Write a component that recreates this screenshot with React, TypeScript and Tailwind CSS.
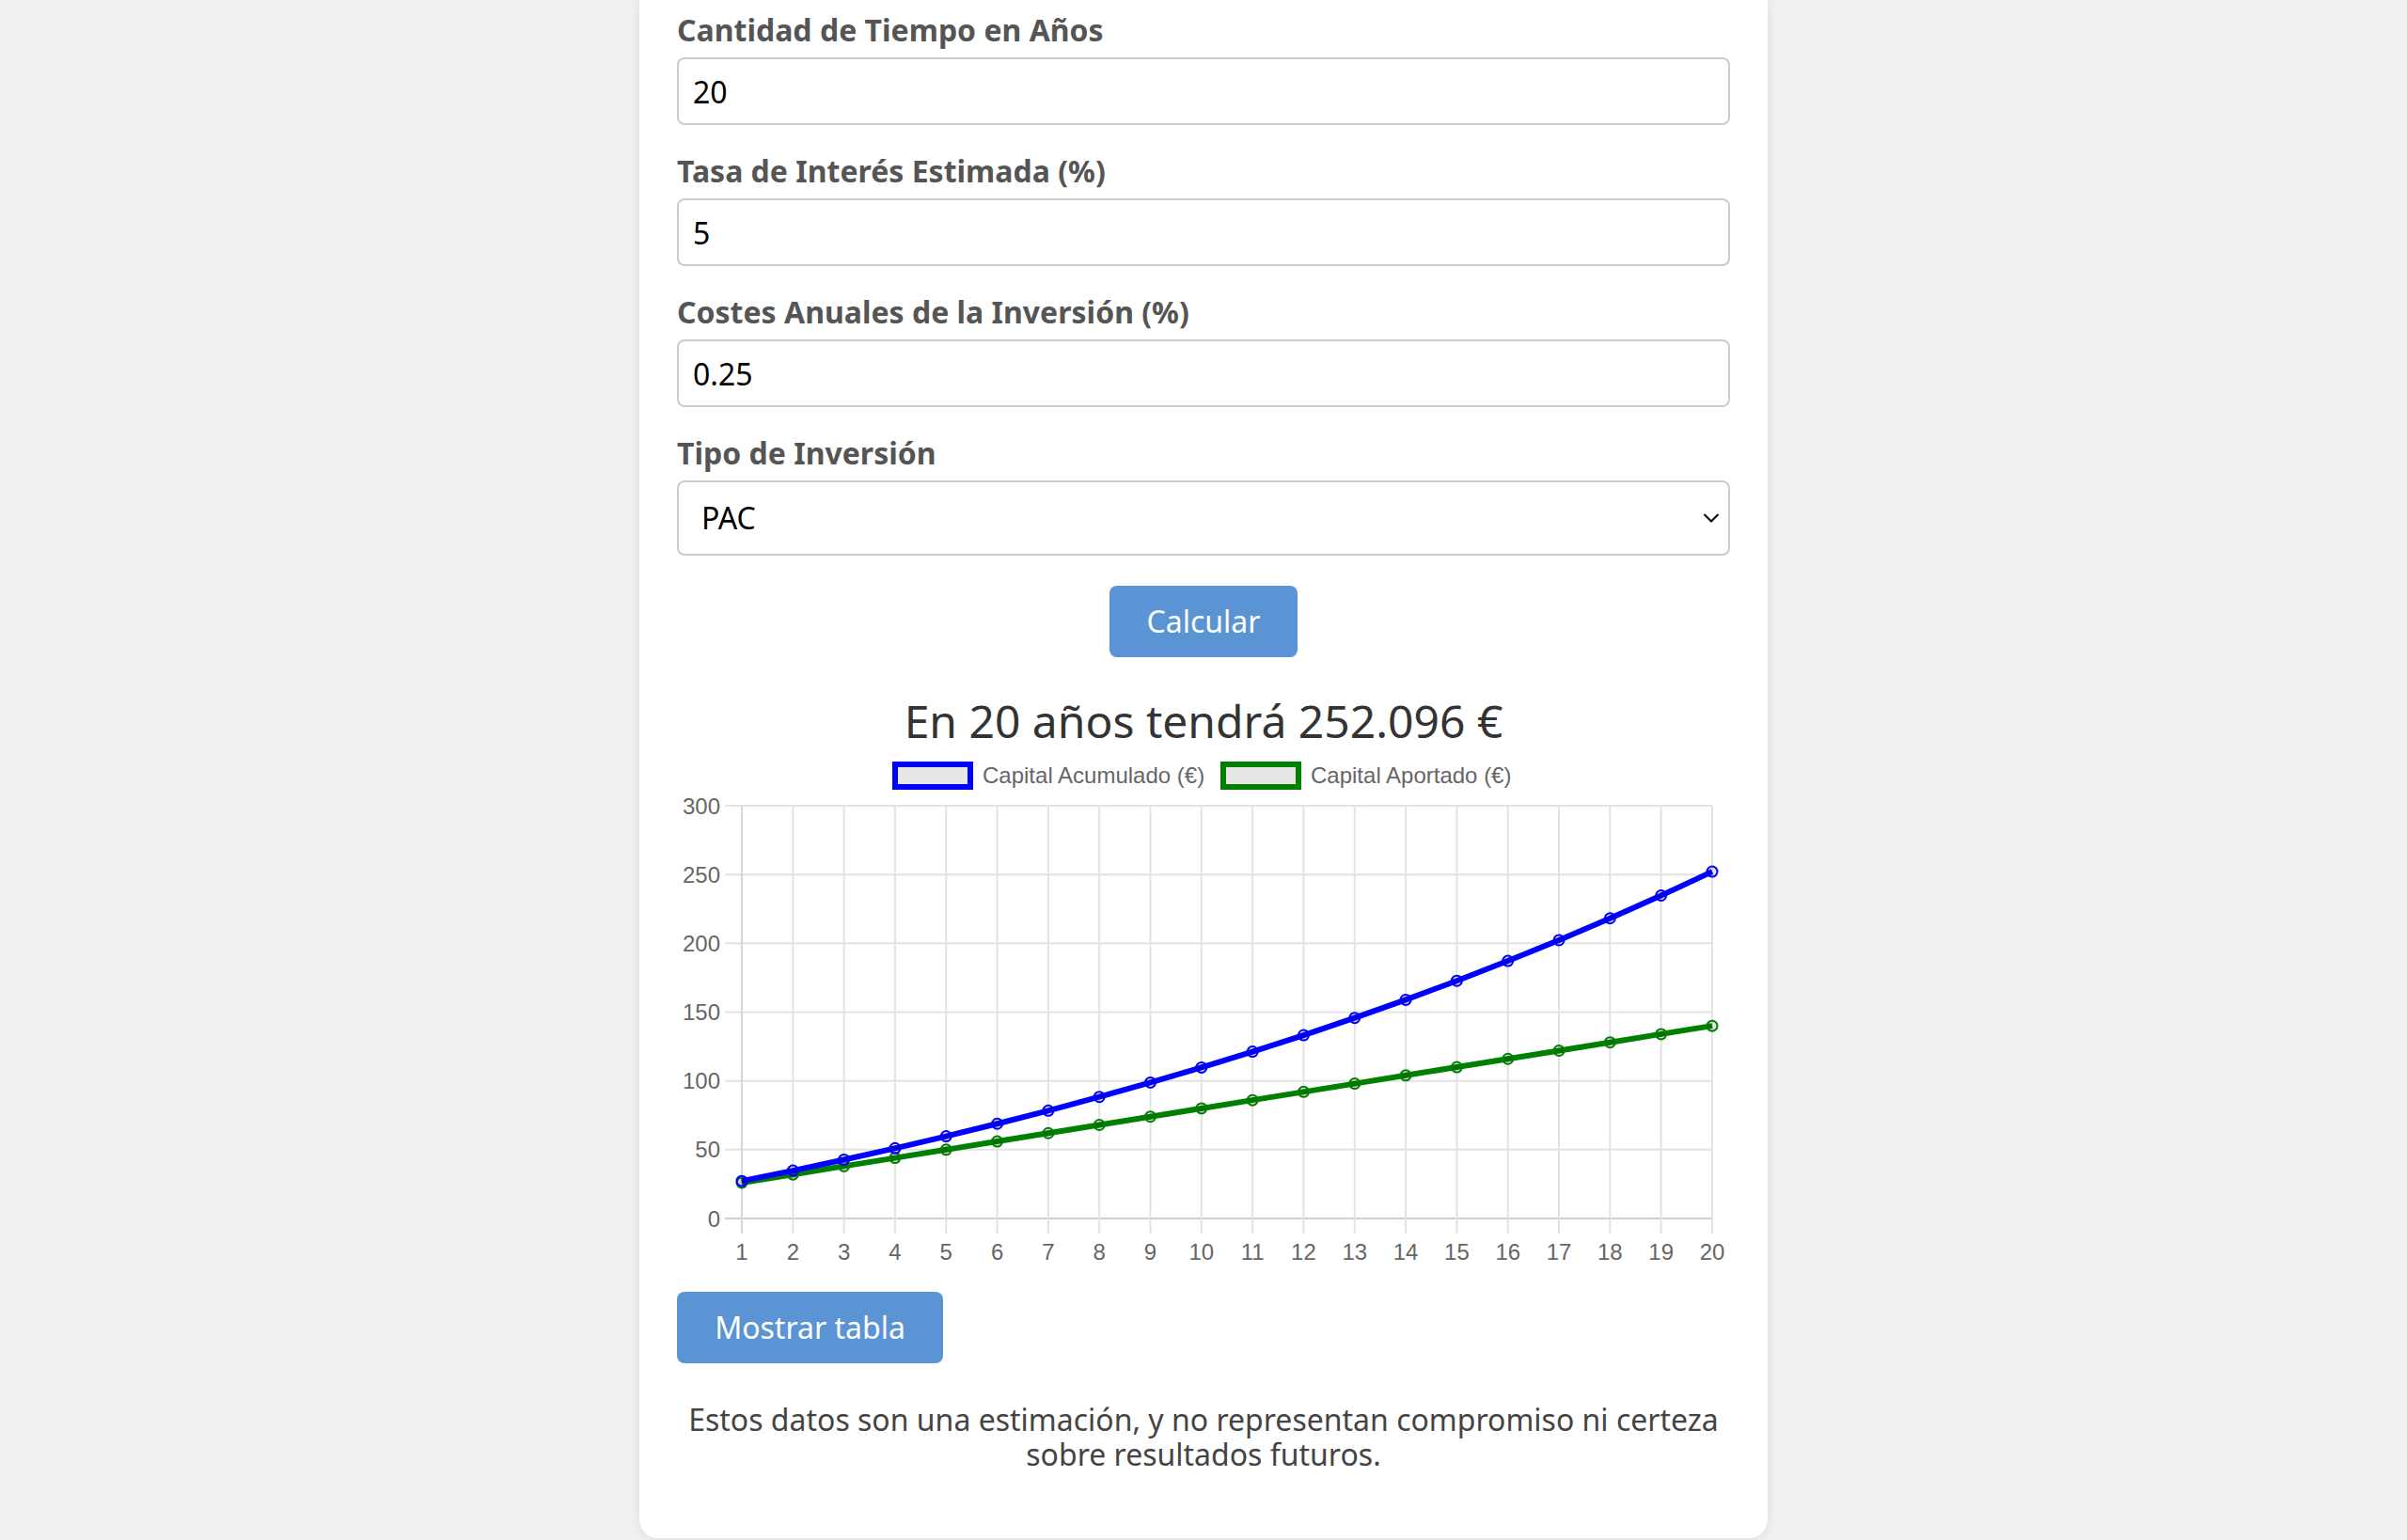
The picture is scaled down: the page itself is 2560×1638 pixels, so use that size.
import React from "react";

const PLOT_L = 69;
const PLOT_R = 1101;
const PLOT_T = 64;
const PLOT_B = 503;

function yOf(v: number) {
  return PLOT_B - (v / 300) * (PLOT_B - PLOT_T);
}
function xOf(i: number) {
  return PLOT_L + (i * (PLOT_R - PLOT_L)) / 19;
}

const green: number[] = [];
const blue: number[] = [];
{
  let v = 20;
  for (let n = 1; n <= 20; n++) {
    green.push(20 + 6 * n);
    v = (v + 6) * 1.0475;
    blue.push(v);
  }
  const k = 252.096 / blue[19];
  for (let i = 0; i < 20; i++) blue[i] = blue[i] * (1 + (k - 1) * (i / 19));
}

function Chart() {
  const yTicks = [0, 50, 100, 150, 200, 250, 300];
  const font = "'Liberation Sans', Arial, Helvetica, sans-serif";
  const line = (d: number[]) => d.map((v, i) => `${i === 0 ? "M" : "L"}${xOf(i).toFixed(2)},${yOf(v).toFixed(2)}`).join(" ");
  return (
    <svg width="1120" height="560" viewBox="0 0 1120 560" className="block">
      {/* legend */}
      <rect x="232" y="20" width="80" height="24" fill="#e6e6e6" stroke="#0000ff" strokeWidth="6" />
      <text x="325" y="39.5" fontFamily={font} fontSize="24" fill="#666">Capital Acumulado (€)</text>
      <rect x="581" y="20" width="80" height="24" fill="#e6e6e6" stroke="#008000" strokeWidth="6" />
      <text x="674" y="39.5" fontFamily={font} fontSize="24" fill="#666">Capital Aportado (€)</text>

      {/* horizontal grid */}
      {yTicks.map((t) => (
        <g key={t}>
          <line x1={51} x2={PLOT_R} y1={yOf(t)} y2={yOf(t)} stroke={t === 0 ? "#cfcfcf" : "#e3e3e3"} strokeWidth="2" />
          <text x="46" y={yOf(t) + 8.5} textAnchor="end" fontFamily={font} fontSize="24" fill="#666">{t}</text>
        </g>
      ))}
      {/* vertical grid */}
      {Array.from({ length: 20 }).map((_, i) => (
        <g key={i}>
          <line x1={xOf(i)} x2={xOf(i)} y1={PLOT_T} y2={PLOT_B + 16} stroke={i === 0 ? "#d6d6d6" : "#e3e3e3"} strokeWidth="2" />
          <text x={xOf(i)} y={546.5} textAnchor="middle" fontFamily={font} fontSize="24" fill="#666">{i + 1}</text>
        </g>
      ))}

      {/* green dataset */}
      <path d={line(green)} fill="none" stroke="#008000" strokeWidth="6" strokeLinejoin="round" />
      {green.map((v, i) => (
        <circle key={i} cx={xOf(i)} cy={yOf(v)} r="5.5" fill="rgba(0,0,0,0.1)" stroke="#008000" strokeWidth="2" />
      ))}
      {/* blue dataset */}
      <path d={line(blue)} fill="none" stroke="#0000ff" strokeWidth="6" strokeLinejoin="round" />
      {blue.map((v, i) => (
        <circle key={i} cx={xOf(i)} cy={yOf(v)} r="5.5" fill="rgba(0,0,0,0.1)" stroke="#0000ff" strokeWidth="2" />
      ))}
    </svg>
  );
}

function Field({ label, value }: { label: string; value: string }) {
  return (
    <div className="mb-[29px]">
      <label className="block text-[32px] leading-[40px] font-bold text-[#555] mb-[9px]">{label}</label>
      <input
        readOnly
        value={value}
        className="block w-full h-[72px] border-2 border-[#ccc] rounded-[8px] pl-[15px] text-[32px] text-black bg-white outline-none"
        style={{ fontFamily: "'Noto Sans', sans-serif" }}
      />
    </div>
  );
}

export default function App() {
  return (
    <div className="min-h-[1638px] bg-[#f0f0f0]" style={{ fontFamily: "'Noto Sans', 'Open Sans', sans-serif" }}>
      <div className="mx-auto w-[1200px] bg-white rounded-b-[20px] shadow-[0_0_12px_rgba(0,0,0,0.08)] px-[40px] pt-[12px] pb-[71px]">
        <Field label="Cantidad de Tiempo en Años" value="20" />
        <Field label="Tasa de Interés Estimada (%)" value="5" />
        <Field label="Costes Anuales de la Inversión (%)" value="0.25" />
        <div>
          <label className="block text-[32px] leading-[40px] font-bold text-[#555] mb-[9px]">Tipo de Inversión</label>
          <div className="relative h-[80px] border-2 border-[#ccc] rounded-[8px] bg-white flex items-center pl-[24px] text-[32px] text-black">
            <span>PAC</span>
            <svg className="absolute right-[9px] top-1/2 -translate-y-1/2" width="18" height="11" viewBox="0 0 18 11">
              <path d="M1.5 1.5 L9 9 L16.5 1.5" fill="none" stroke="#111" strokeWidth="2.2" />
            </svg>
          </div>
        </div>
        <div className="flex justify-center mt-[32px]">
          <button className="h-[76px] w-[200px] rounded-[8px] bg-[#5a94d4] text-white text-[32px]">Calcular</button>
        </div>
        <h2 className="mt-[42px] text-center text-[48px] leading-[52px] text-[#333] font-normal">En 20 años tendrá 252.096 €</h2>
        <Chart />
        <button className="mt-[21px] h-[76px] w-[283px] rounded-[8px] bg-[#5a94d4] text-white text-[32px]">Mostrar tabla</button>
        <p className="mt-[41px] text-center text-[32px] leading-[37px] text-[#444]">
          Estos datos son una estimación, y no representan compromiso ni certeza sobre resultados futuros.
        </p>
      </div>
    </div>
  );
}
